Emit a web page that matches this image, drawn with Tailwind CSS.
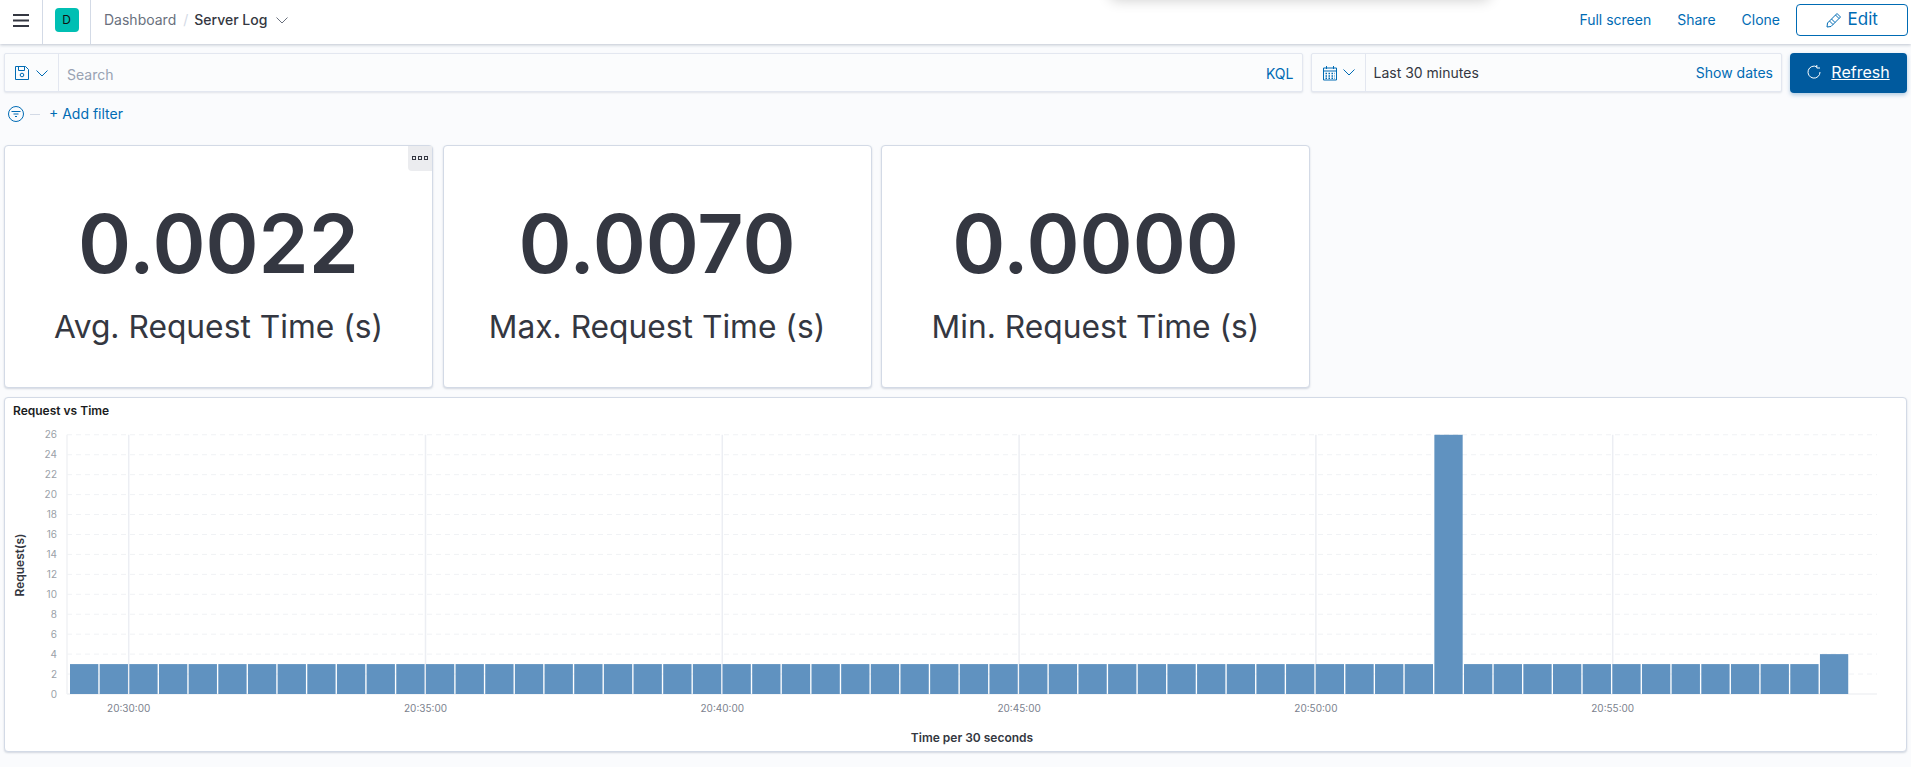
<!DOCTYPE html>
<html lang="en">
<head>
  <meta charset="UTF-8">
  <title>Server Log - Dashboard</title>
  <script src="https://cdn.jsdelivr.net/npm/@tailwindcss/browser@4"></script>
</head>
<body class="bg-[#fafbfd] h-[767px] overflow-hidden font-[Inter,sans-serif] text-[#343741] text-sm">
  <!-- Top bar -->
  <header class="relative h-[44px] bg-white shadow-[0_1px_3px_rgba(152,162,179,0.6)] flex items-center overflow-hidden">
    <div class="absolute left-[1110px] top-[-40px] w-[380px] h-[36px] rounded-md shadow-[0_4px_14px_rgba(0,0,0,0.2)]"></div>
    <button class="w-[43px] h-[44px] flex items-center justify-center border-r border-[#d3dae6] pb-[4px]">
      <svg width="16" height="13" viewBox="0 0 16 13" fill="#343741"><rect width="16" height="2" y="0"/><rect width="16" height="2" y="5.5"/><rect width="16" height="2" y="11"/></svg>
    </button>
    <div class="w-[48px] h-[44px] flex items-center justify-center border-r border-[#d3dae6] pb-[4px]">
      <div class="w-[24px] h-[24px] rounded-[4px] bg-[#00bfb3] flex items-center justify-center text-xs text-[#111]">D</div>
    </div>
    <nav class="flex items-center ml-[13px] pb-[4px]">
      <a class="text-[#69707d]">Dashboard</a>
      <span class="mx-[7px] text-[#d3dae6]">/</span>
      <span class="font-medium -ml-[1px]">Server Log</span>
      <svg class="ml-[9px]" width="12" height="7" viewBox="0 0 12 7" fill="none" stroke="#69707d"><path d="M0.5 0.5 L6 6 L11.5 0.5"/></svg>
    </nav>
    <div class="ml-auto flex items-center pr-[3.5px]">
      <a class="text-[#006bb4] mr-[26px] pb-[4px]">Full screen</a>
      <a class="text-[#006bb4] mr-[26px] pb-[4px]">Share</a>
      <a class="text-[#006bb4] mr-[16px] pb-[4px]">Clone</a>
      <button class="w-[111.5px] h-[32px] mb-[5px] border border-[#006bb4] rounded-[4px] text-[#006bb4] text-base flex items-center justify-center gap-[6px]">
        <svg width="16" height="16" viewBox="0 0 16 16" fill="none" stroke="#006bb4"><path d="M1.5 11 L11 1.5 L14.5 5 L5 14.5 L1 15 Z M3.5 9 L7 12.5 M5.5 7 L9 10.5 M9.5 3 L13 6.5"/></svg>
        <span class="text-[17px] pt-[1px]">Edit</span>
      </button>
    </div>
  </header>

  <!-- Query bar -->
  <div class="flex items-start mt-[9px] px-[4px]">
    <div class="w-[1298.5px] h-[39px] flex items-center bg-[#fbfcfd] border border-[#e3e7f0] rounded-[2px] shadow-[0_1px_2px_rgba(152,162,179,0.25)]">
      <div class="w-[54px] h-full flex items-center justify-center gap-[6px] border-r border-[#e3e7f0] pt-[1px] pr-[2px]">
        <svg width="16" height="16" viewBox="0 0 16 16" fill="none" stroke="#006bb4"><path d="M1.5 1.5 H11.5 L14.5 4.5 V14.5 H1.5 Z M4.5 1.5 V5.5 H10.5 V1.5"/><circle cx="8" cy="10" r="1.8"/></svg>
        <svg width="12" height="7" viewBox="0 0 12 7" fill="none" stroke="#006bb4"><path d="M0.5 0.5 L6 6 L11.5 0.5"/></svg>
      </div>
      <span class="ml-[8px] pt-[4px] text-[#98a2b3]">Search</span>
      <a class="ml-auto mr-[8px] pt-[2px] text-[#006bb4]">KQL</a>
    </div>
    <div class="ml-[8px] w-[471.5px] h-[39px] flex items-center bg-[#fbfcfd] border border-[#e3e7f0] rounded-[2px] shadow-[0_1px_2px_rgba(152,162,179,0.25)]">
      <div class="w-[54px] h-full flex items-center justify-center gap-[5px] border-r border-[#e3e7f0]">
        <svg width="16" height="16" viewBox="0 0 16 16" fill="none" stroke="#006bb4"><path d="M1.5 3 H14.5 V15 H1.5 Z M1.5 6 H14.5 M4.5 1 V4 M11.5 1 V4"/><path stroke-dasharray="1.5 1.5" stroke-width="1.5" d="M3.5 8.5 H13 M3.5 11 H13 M3.5 13.2 H13"/></svg>
        <svg width="12" height="7" viewBox="0 0 12 7" fill="none" stroke="#006bb4"><path d="M0.5 0.5 L6 6 L11.5 0.5"/></svg>
      </div>
      <span class="ml-[8px]">Last 30 minutes</span>
      <a class="ml-auto mr-[8px] text-[#006bb4]">Show dates</a>
    </div>
    <button class="ml-[8px] w-[117px] h-[40px] rounded-[4px] bg-[#005a9e] text-white text-base flex items-center justify-center gap-[10px] shadow-[0_2px_4px_rgba(0,90,158,0.3)] pb-[2px]">
      <svg width="14" height="14" viewBox="0 0 14 14" fill="none" stroke="#fff"><path d="M9.8 1.8 A6 6 0 1 0 13 7 M9.8 0 V3 H13"/></svg>
      <span class="underline">Refresh</span>
    </button>
  </div>

  <!-- Filter row -->
  <div class="flex items-center mt-[9px] h-[24px] pl-[8px]">
    <svg width="16" height="16" viewBox="0 0 16 16" fill="none" stroke="#006bb4"><circle cx="8" cy="8" r="7.5"/><path d="M3.5 5.5 H12.5 M5.5 8 H10.5 M7 10.5 H9"/></svg>
    <span class="ml-[6px] w-[10px] h-px bg-[#d3dae6]"></span>
    <a class="ml-[9px] text-[#006bb4]">+ Add filter</a>
  </div>

  <!-- Metric panels -->
  <div class="flex mt-[19px] px-[4px] gap-[9.5px]">
    <div class="relative w-[429px] h-[243px] bg-white border border-[#d3dae6] rounded-[4px] shadow-[0_1px_2px_rgba(152,162,179,0.4)] flex flex-col items-center">
      <span class="text-[80.5px] leading-[100px] font-semibold mt-[48px]">0.0022</span>
      <span class="text-[31.75px] leading-[40px] mt-[13px]">Avg. Request Time (s)</span>
      <div class="absolute right-0 top-0 w-[24px] h-[25px] bg-[#ebecef] rounded-bl-[4px] flex items-center justify-center gap-[2px] pb-[1px]">
        <i class="w-[4px] h-[4px] border border-[#343741]"></i><i class="w-[4px] h-[4px] border border-[#343741]"></i><i class="w-[4px] h-[4px] border border-[#343741]"></i>
      </div>
    </div>
    <div class="w-[429px] h-[243px] bg-white border border-[#d3dae6] rounded-[4px] shadow-[0_1px_2px_rgba(152,162,179,0.4)] flex flex-col items-center">
      <span class="text-[80.5px] leading-[100px] font-semibold mt-[48px]">0.0070</span>
      <span class="text-[31.75px] leading-[40px] mt-[13px]">Max. Request Time (s)</span>
    </div>
    <div class="w-[429px] h-[243px] bg-white border border-[#d3dae6] rounded-[4px] shadow-[0_1px_2px_rgba(152,162,179,0.4)] flex flex-col items-center">
      <span class="text-[80.5px] leading-[100px] font-semibold mt-[48px]">0.0000</span>
      <span class="text-[31.75px] leading-[40px] mt-[13px]">Min. Request Time (s)</span>
    </div>
  </div>

  <!-- Histogram panel -->
  <div class="relative mx-[4px] mt-[9px] h-[355px] bg-white border border-[#d3dae6] rounded-[4px] shadow-[0_1px_2px_rgba(152,162,179,0.4)]">
    <h2 class="absolute left-[8px] top-[5px] text-xs font-semibold text-[#1a1c21]">Request vs Time</h2>
    <svg id="chart" class="absolute left-0 top-0" width="1901" height="353" font-family="Inter, sans-serif"></svg>
  </div>

  <script>
    // panel origin is at 5,398 so everything is drawn relative to that
    const svg = document.getElementById('chart');
    const ox = 5, oy = 398;
    const y0 = 694 - oy;
    const unit = 9.97;
    const pitch = 29.66;
    let out = '';

    // horizontal dashed grid + y labels
    for (let v = 0; v <= 26; v += 2) {
      const y = y0 - v * unit;
      if (v > 0) out += `<line x1="${67 - ox}" x2="${1877 - ox}" y1="${y}" y2="${y}" stroke="#f0f2f5" stroke-dasharray="5 4"/>`;
      out += `<text x="${57 - ox}" y="${y + 3.5}" text-anchor="end" font-size="10" fill="#9a9fa8">${v}</text>`;
    }
    out += `<line x1="${67 - ox}" x2="${67 - ox}" y1="${y0 - 26 * unit}" y2="${y0}" stroke="#f0f2f5" stroke-width="1.5"/>`;
    out += `<line x1="${67 - ox}" x2="${1877 - ox}" y1="${y0}" y2="${y0}" stroke="#f0f2f5" stroke-width="1.5"/>`;

    // vertical grid + x labels, one every 5 minutes
    const times = ['20:30:00', '20:35:00', '20:40:00', '20:45:00', '20:50:00', '20:55:00'];
    times.forEach((t, i) => {
      const x = 128.7 + i * 296.8 - ox;
      out += `<line x1="${x}" x2="${x}" y1="${y0 - 26 * unit}" y2="${y0}" stroke="#eceef3" stroke-width="1.5"/>`;
      out += `<text x="${x}" y="${y0 + 17.5}" text-anchor="middle" font-size="10" fill="#7c828e">${t}</text>`;
    });

    // 60 buckets of 30 seconds
    for (let i = 0; i < 60; i++) {
      const v = i === 46 ? 26 : i === 59 ? 4 : 3;
      const h = v * unit;
      out += `<rect x="${70 + i * pitch - ox}" y="${y0 - h}" width="28.3" height="${h}" fill="#6092c0"/>`;
    }

    out += `<text transform="translate(${24 - ox} ${565 - oy}) rotate(-90)" text-anchor="middle" font-size="12" font-weight="600" fill="#343741">Request(s)</text>`;
    out += `<text x="${972 - ox}" y="${742 - oy}" text-anchor="middle" font-size="12" font-weight="600" fill="#343741">Time per 30 seconds</text>`;
    svg.innerHTML = out;
  </script>
</body>
</html>
